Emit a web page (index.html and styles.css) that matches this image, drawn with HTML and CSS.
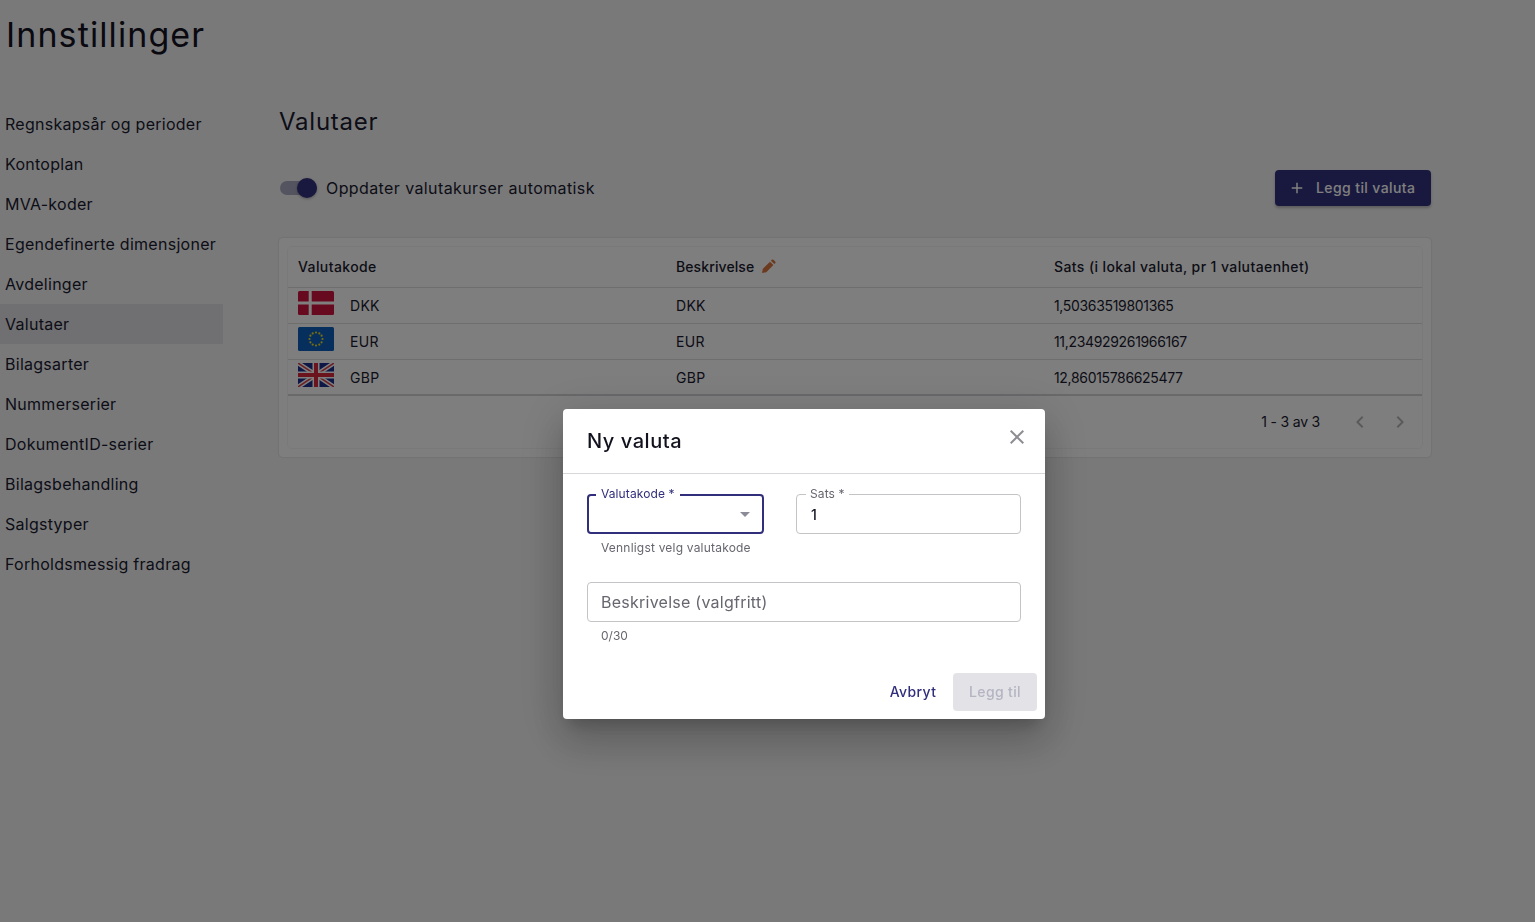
FILE: index.html
```html
<!DOCTYPE html>
<html lang="no">
<head>
    <meta charset="UTF-8">
    <title>Innstillinger</title>
    <link rel="stylesheet" href="styles.css">
</head>
<body>
    <div class="page">
        <h1 class="page-title">Innstillinger</h1>
        <div class="layout">
            <nav class="sidebar">
                <a class="nav-item">Regnskapsår og perioder</a>
                <a class="nav-item">Kontoplan</a>
                <a class="nav-item">MVA-koder</a>
                <a class="nav-item">Egendefinerte dimensjoner</a>
                <a class="nav-item">Avdelinger</a>
                <a class="nav-item active">Valutaer</a>
                <a class="nav-item">Bilagsarter</a>
                <a class="nav-item">Nummerserier</a>
                <a class="nav-item">DokumentID-serier</a>
                <a class="nav-item">Bilagsbehandling</a>
                <a class="nav-item">Salgstyper</a>
                <a class="nav-item">Forholdsmessig fradrag</a>
            </nav>

            <main class="content">
                <h2 class="section-title">Valutaer</h2>

                <div class="toolbar">
                    <label class="toggle-row">
                        <span class="switch"><span class="switch-thumb"></span></span>
                        <span>Oppdater valutakurser automatisk</span>
                    </label>
                    <button class="add-button">
                        <svg class="add-icon" viewBox="0 0 24 24"><path d="M19 13h-6v6h-2v-6H5v-2h6V5h2v6h6z"/></svg>
                        Legg til valuta
                    </button>
                </div>

                <div class="card">
                    <div class="grid-box">
                        <table class="currency-table">
                            <thead>
                                <tr>
                                    <th>Valutakode</th>
                                    <th>
                                        <span class="head-with-icon">Beskrivelse
                                            <svg class="pencil" viewBox="0 0 16 16"><path d="M1 15l1-4.6L9.6 2.8l3.6 3.6L5.6 14zM10.6 1.8l.9-.9a1.3 1.3 0 0 1 1.8 0l1.8 1.8a1.3 1.3 0 0 1 0 1.8l-.9.9z"/></svg>
                                        </span>
                                    </th>
                                    <th>Sats (i lokal valuta, pr 1 valutaenhet)</th>
                                </tr>
                            </thead>
                            <tbody>
                                <tr>
                                    <td>
                                        <span class="code-cell">
                                            <svg class="flag" viewBox="0 0 36 24">
                                                <rect width="36" height="24" rx="1.5" fill="#d0143f"/>
                                                <rect x="10.7" width="3" height="24" fill="#fff"/>
                                                <rect y="10.5" width="36" height="3" fill="#fff"/>
                                            </svg>
                                            DKK
                                        </span>
                                    </td>
                                    <td>DKK</td>
                                    <td class="rate">1,50363519801365</td>
                                </tr>
                                <tr>
                                    <td>
                                        <span class="code-cell">
                                            <svg class="flag" viewBox="0 0 36 24">
                                                <rect width="36" height="24" rx="1.5" fill="#0e5fbd"/>
                                                <g fill="#f2dc18">
                                                    <circle cx="18" cy="5.5" r="1.1"/>
                                                    <circle cx="21.3" cy="6.4" r="1.1"/>
                                                    <circle cx="23.6" cy="8.7" r="1.1"/>
                                                    <circle cx="24.5" cy="12" r="1.1"/>
                                                    <circle cx="23.6" cy="15.3" r="1.1"/>
                                                    <circle cx="21.3" cy="17.6" r="1.1"/>
                                                    <circle cx="18" cy="18.5" r="1.1"/>
                                                    <circle cx="14.7" cy="17.6" r="1.1"/>
                                                    <circle cx="12.4" cy="15.3" r="1.1"/>
                                                    <circle cx="11.5" cy="12" r="1.1"/>
                                                    <circle cx="12.4" cy="8.7" r="1.1"/>
                                                    <circle cx="14.7" cy="6.4" r="1.1"/>
                                                </g>
                                            </svg>
                                            EUR
                                        </span>
                                    </td>
                                    <td>EUR</td>
                                    <td class="rate">11,234929261966167</td>
                                </tr>
                                <tr>
                                    <td>
                                        <span class="code-cell">
                                            <svg class="flag" viewBox="0 0 36 24">
                                                <rect width="36" height="24" fill="#1c2f8c"/>
                                                <path d="M0 0l36 24M36 0L0 24" stroke="#fff" stroke-width="4.5"/>
                                                <path d="M0 0l36 24M36 0L0 24" stroke="#d6404a" stroke-width="1.5"/>
                                                <path d="M18 0v24M0 12h36" stroke="#fff" stroke-width="7"/>
                                                <path d="M18 0v24M0 12h36" stroke="#d6283c" stroke-width="4"/>
                                            </svg>
                                            GBP
                                        </span>
                                    </td>
                                    <td>GBP</td>
                                    <td class="rate">12,86015786625477</td>
                                </tr>
                            </tbody>
                        </table>
                        <div class="pagination">
                            <span>1 - 3 av 3</span>
                            <svg class="page-arrow first" viewBox="0 0 24 24"><path d="M15.41 7.41 14 6l-6 6 6 6 1.41-1.41L10.83 12z"/></svg>
                            <svg class="page-arrow" viewBox="0 0 24 24"><path d="M10 6 8.59 7.41 13.17 12l-4.58 4.59L10 18l6-6z"/></svg>
                        </div>
                    </div>
                </div>
            </main>
        </div>
    </div>

    <!-- Dialog on top of the page -->
    <div class="backdrop"></div>
    <div class="dialog">
        <div class="dialog-head">
            <h3 class="dialog-title">Ny valuta</h3>
            <svg class="close-icon" viewBox="0 0 24 24"><path d="M19 6.41 17.59 5 12 10.59 6.41 5 5 6.41 10.59 12 5 17.59 6.41 19 12 13.41 17.59 19 19 17.59 13.41 12z"/></svg>
        </div>
        <div class="dialog-body">
            <div class="field-row">
                <div class="field field-code">
                    <div class="input-box focused">
                        <span class="float-label">Valutakode *</span>
                        <span class="select-arrow"></span>
                    </div>
                    <p class="helper">Vennligst velg valutakode</p>
                </div>
                <div class="field field-rate">
                    <div class="input-box">
                        <span class="float-label muted">Sats *</span>
                        <span class="input-value">1</span>
                    </div>
                </div>
            </div>
            <div class="field">
                <div class="input-box">
                    <span class="placeholder">Beskrivelse (valgfritt)</span>
                </div>
                <p class="helper counter">0/30</p>
            </div>
        </div>
        <div class="dialog-actions">
            <button class="text-button">Avbryt</button>
            <button class="disabled-button">Legg til</button>
        </div>
    </div>
</body>
</html>
```

FILE: styles.css
```css
/* Reset and general styling */
* {
    margin: 0;
    padding: 0;
    box-sizing: border-box;
    font-family: Inter, "Noto Sans", sans-serif;
}

html, body {
    height: 100%;
}

body {
    background-color: #f3f3f5;
    color: #1a1a2e;
    font-size: 16px;
    overflow: hidden;
}

.page {
    padding: 0 104px 0 5px;
}

.page-title {
    font-size: 34px;
    font-weight: 400;
    line-height: 70px;
    height: 104px;
    margin-left: 1px;
    letter-spacing: 1.1px;
    color: #12121f;
}

.layout {
    display: flex;
}

/* Sidebar */
.sidebar {
    width: 223px;
    margin-left: -5px;
    flex-shrink: 0;
    display: flex;
    flex-direction: column;
}

.nav-item {
    height: 40px;
    line-height: 40px;
    padding-left: 5px;
    font-size: 16px;
    letter-spacing: 0.27px;
}

.nav-item.active {
    background-color: #e0dfe4;
}

/* Main content */
.content {
    flex: 1;
    margin-left: 56px;
}

.section-title {
    font-size: 24px;
    font-weight: 400;
    line-height: 36px;
    letter-spacing: 0.75px;
}

.toolbar {
    display: flex;
    justify-content: space-between;
    align-items: center;
    margin-top: 30px;
    height: 36px;
}

.toggle-row {
    display: flex;
    align-items: center;
    gap: 9px;
    padding-left: 1px;
    font-size: 16px;
    letter-spacing: 0.4px;
}

.switch {
    position: relative;
    display: block;
    width: 37px;
    height: 14px;
    border-radius: 7px;
    background-color: #a9a8c0;
}

.switch-thumb {
    position: absolute;
    top: -3px;
    right: 0;
    width: 20px;
    height: 20px;
    border-radius: 50%;
    background-color: #33327f;
    box-shadow: 0 1px 3px rgba(0, 0, 0, 0.3);
}

.add-button {
    display: flex;
    align-items: center;
    gap: 10px;
    width: 156px;
    height: 36px;
    padding: 0 0 2px 13px;
    border: none;
    border-radius: 4px;
    background-color: #33327f;
    color: #fff;
    font-size: 14px;
    font-weight: 500;
    letter-spacing: 0.4px;
    box-shadow: 0 2px 3px rgba(0, 0, 0, 0.25);
}

.add-icon {
    width: 18px;
    height: 18px;
    margin-top: 2px;
    fill: #fff;
}

/* Table card */
.card {
    margin-top: 32px;
    padding: 9px;
    height: 219px;
    background-color: #fdfdfd;
    border-radius: 4px;
    box-shadow: 0 0 2px rgba(0, 0, 0, 0.2);
}

.grid-box {
    height: 100%;
    border-radius: 4px;
    box-shadow: 0 0 0 1px #f3f3f4;
}

.currency-table {
    width: 100%;
    border-collapse: collapse;
    table-layout: fixed;
    font-size: 14px;
}

.currency-table th {
    height: 40px;
    padding-left: 10px;
    text-align: left;
    font-weight: 500;
    letter-spacing: 0.4px;
    border-bottom: 1px solid #dcdcdf;
}

.currency-table td {
    height: 36px;
    padding-left: 10px;
    letter-spacing: 0.3px;
    border-bottom: 1px solid #dcdcdf;
}

.currency-table td.rate {
    letter-spacing: -0.33px;
}

.currency-table tbody tr:last-child td {
    padding-top: 1px;
    border-bottom: 2px solid #d2d2d5;
}

.head-with-icon {
    display: inline-flex;
    align-items: center;
    gap: 7px;
    letter-spacing: 0.1px;
}

.pencil {
    width: 15px;
    height: 15px;
    fill: #d9743c;
}

.code-cell {
    display: flex;
    align-items: center;
    gap: 16px;
}

.flag {
    width: 36px;
    height: 24px;
    margin-top: -4px;
}

.pagination {
    display: flex;
    justify-content: flex-end;
    align-items: center;
    height: 51px;
    padding-right: 10px;
    font-size: 14px;
    letter-spacing: -0.2px;
}

.page-arrow {
    width: 24px;
    height: 24px;
    margin-left: 16px;
    fill: #b5b5b8;
}

.page-arrow.first {
    margin-left: 28px;
}

/* Dialog */
.backdrop {
    position: fixed;
    inset: 0;
    background-color: rgba(0, 0, 0, 0.5);
}

.dialog {
    position: fixed;
    left: 563px;
    top: 409px;
    width: 482px;
    height: 310px;
    background-color: #fff;
    border-radius: 4px;
    box-shadow: 0 11px 15px -7px rgba(0, 0, 0, 0.2), 0 24px 38px 3px rgba(0, 0, 0, 0.14), 0 9px 46px 8px rgba(0, 0, 0, 0.12);
}

.dialog-head {
    display: flex;
    justify-content: space-between;
    height: 65px;
    padding: 16px 16px 0 24px;
    border-bottom: 1px solid #d7d7d9;
}

.dialog-title {
    font-size: 20px;
    font-weight: 500;
    line-height: 32px;
    letter-spacing: 0.55px;
    color: #12121f;
}

.close-icon {
    width: 24px;
    height: 24px;
    fill: #8d8d93;
}

.dialog-body {
    padding: 20px 24px 0;
    display: flex;
    flex-direction: column;
    gap: 27px;
}

.field-row {
    display: flex;
    gap: 32px;
}

.field-code {
    width: 177px;
}

.field-rate {
    flex: 1;
}

.input-box {
    position: relative;
    display: flex;
    align-items: center;
    height: 40px;
    padding: 0 13px;
    border: 1px solid #c4c4c7;
    border-radius: 4px;
}

.input-box.focused {
    border: 2px solid #312e7c;
}

.float-label {
    position: absolute;
    top: -9px;
    left: 9px;
    padding: 0 4px;
    background-color: #fff;
    font-size: 12px;
    line-height: 15px;
    letter-spacing: 0.1px;
    color: #312e7c;
}

.focused .float-label {
    left: 7px;
    top: -10px;
    padding: 0 5px;
}

.float-label.muted {
    color: #66666f;
}

.select-arrow {
    position: absolute;
    right: 12px;
    top: 16px;
    border-left: 5px solid transparent;
    border-right: 5px solid transparent;
    border-top: 5px solid #8c8c99;
}

.input-value {
    margin-left: 1px;
    font-size: 14px;
    font-weight: 500;
    color: #12121f;
}

.placeholder {
    font-size: 16px;
    letter-spacing: 0.25px;
    color: #66666f;
}

.helper {
    margin: 7px 0 0 14px;
    font-size: 12px;
    line-height: 14px;
    letter-spacing: 0.2px;
    color: #66666f;
}

.counter {
    margin-top: 7px;
    letter-spacing: 0;
}

.dialog-actions {
    position: absolute;
    right: 8px;
    bottom: 8px;
    display: flex;
    align-items: center;
}

.text-button,
.disabled-button {
    height: 38px;
    padding-bottom: 2px;
    border: none;
    border-radius: 4px;
    font-size: 14px;
    font-weight: 500;
    letter-spacing: 0.35px;
}

.text-button {
    width: 80px;
    background: none;
    color: #312e7c;
}

.disabled-button {
    width: 84px;
    background-color: #e2e2e7;
    color: #b4b4c2;
}
```
